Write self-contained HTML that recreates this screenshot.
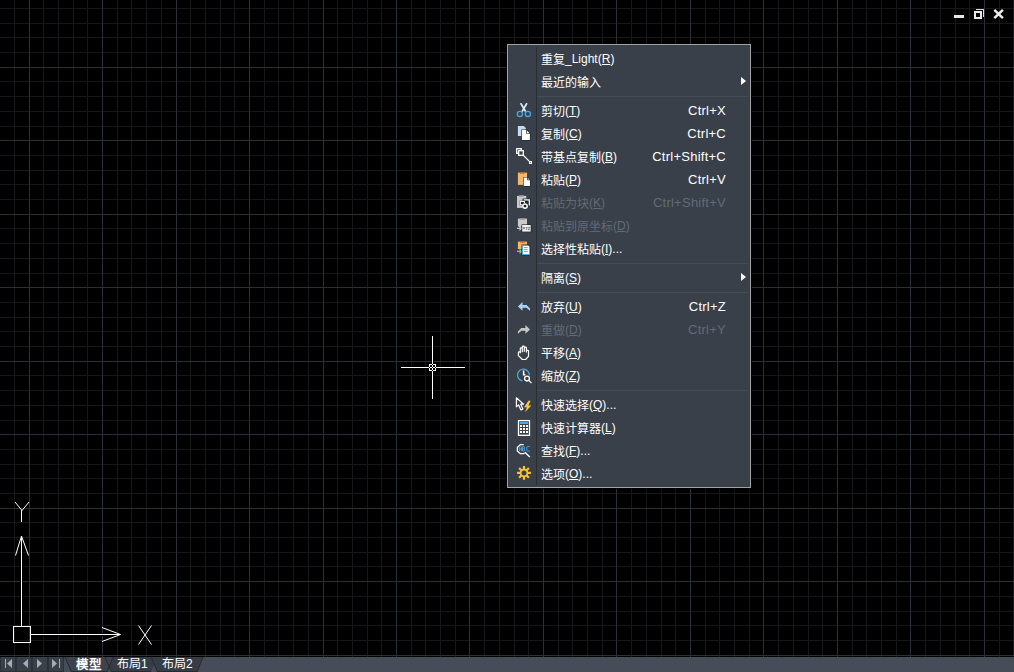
<!DOCTYPE html>
<html lang="zh-CN"><head><meta charset="utf-8">
<style>
html,body{margin:0;padding:0;}
body{width:1014px;height:672px;background:#000;overflow:hidden;position:relative;font-family:"Liberation Sans",sans-serif;}
svg{position:absolute;left:0;top:0;}
#menu{position:absolute;left:507px;top:44px;width:242px;height:442px;border:1px solid #a3a3a3;background:#394049;box-shadow:-1px 0 0 #000,1px 0 0 #000,0 1px 0 #000;}
#vsep{position:absolute;left:28px;top:2px;width:1px;height:438px;background:#2a2d32;}
.sep{position:absolute;left:29px;right:2px;height:1px;background:#464c56;}
.row{position:absolute;left:0;right:0;height:23px;color:#fff;font-size:12px;line-height:23px;}
.row.dis{color:#636b76;}
.lab{position:absolute;left:33px;top:2px;white-space:nowrap;}
.sc{position:absolute;right:24px;top:0px;font-size:13px;letter-spacing:0.25px;white-space:nowrap;}
u{text-decoration:underline;}
.lt{position:relative;top:-1px;}
.arr{position:absolute;left:233px;top:7px;width:0;height:0;border-left:5px solid #fff;border-top:4px solid transparent;border-bottom:4px solid transparent;}
#bar{position:absolute;left:0;top:657px;width:1014px;height:15px;background:#474d58;}
</style></head><body>
<svg width="1014" height="672" viewBox="0 0 1014 672" shape-rendering="crispEdges"><path d="M14.5 0V657M43.5 0V657M58.5 0V657M73.5 0V657M87.5 0V657M117.5 0V657M131.5 0V657M146.5 0V657M161.5 0V657M190.5 0V657M205.5 0V657M220.5 0V657M234.5 0V657M264.5 0V657M278.5 0V657M293.5 0V657M308.5 0V657M337.5 0V657M352.5 0V657M367.5 0V657M381.5 0V657M411.5 0V657M425.5 0V657M440.5 0V657M455.5 0V657M484.5 0V657M499.5 0V657M514.5 0V657M528.5 0V657M558.5 0V657M572.5 0V657M587.5 0V657M602.5 0V657M631.5 0V657M646.5 0V657M661.5 0V657M675.5 0V657M705.5 0V657M719.5 0V657M734.5 0V657M749.5 0V657M778.5 0V657M793.5 0V657M808.5 0V657M822.5 0V657M852.5 0V657M866.5 0V657M881.5 0V657M896.5 0V657M925.5 0V657M940.5 0V657M955.5 0V657M969.5 0V657M999.5 0V657M1013.5 0V657M0 8.5H1014M0 23.5H1014M0 37.5H1014M0 52.5H1014M0 81.5H1014M0 96.5H1014M0 111.5H1014M0 126.5H1014M0 155.5H1014M0 170.5H1014M0 184.5H1014M0 199.5H1014M0 228.5H1014M0 243.5H1014M0 258.5H1014M0 273.5H1014M0 302.5H1014M0 317.5H1014M0 331.5H1014M0 346.5H1014M0 375.5H1014M0 390.5H1014M0 405.5H1014M0 420.5H1014M0 449.5H1014M0 464.5H1014M0 478.5H1014M0 493.5H1014M0 522.5H1014M0 537.5H1014M0 552.5H1014M0 566.5H1014M0 596.5H1014M0 611.5H1014M0 625.5H1014M0 640.5H1014" stroke="#15181b" stroke-width="1" fill="none"/><path d="M29.5 0V657M102.5 0V657M176.5 0V657M249.5 0V657M323.5 0V657M396.5 0V657M469.5 0V657M543.5 0V657M616.5 0V657M690.5 0V657M763.5 0V657M837.5 0V657M910.5 0V657M984.5 0V657M0 67.5H1014M0 140.5H1014M0 214.5H1014M0 287.5H1014M0 361.5H1014M0 434.5H1014M0 508.5H1014M0 581.5H1014M0 655.5H1014" stroke="#2a3037" stroke-width="1" fill="none"/></svg>
<svg width="1014" height="672" viewBox="0 0 1014 672"><path d="M432.5 336V399M401 367.5H465" stroke="#000" stroke-width="3" fill="none"/><path d="M21.5 536V626M31 634.5H120" stroke="#000" stroke-width="3" fill="none"/><path d="M432.5 336V399M401 367.5H465" stroke="#fff" stroke-width="1" fill="none"/><rect x="429.5" y="364.5" width="6" height="6" fill="none" stroke="#fff"/><path d="M432 364h1v1h-1zM432 370h1v1h-1zM429 367h1v1h-1zM435 367h1v1h-1zM432 367h1v1h-1z" fill="#000" shape-rendering="crispEdges"/><path d="M21.5 536V626M31 634.5H120M21.5 536L15.5 555.5M21.5 536L28.5 555.5M120.5 634.5L102 627.5M120.5 634.5L102 641.5M15 502L22 510.5L29 502M21.5 510V522M138.5 625.5L151.5 644.5M151.5 625.5L138.5 644.5" stroke="#fff" stroke-width="1" fill="none"/><rect x="13.5" y="626.5" width="17" height="16" fill="none" stroke="#fff"/><rect x="954" y="15" width="10" height="3" fill="#e6e6e6"/><path d="M976 9.5H983.5V17" stroke="#dcdcdc" fill="none" shape-rendering="crispEdges"/><rect x="975" y="12" width="6" height="6" fill="none" stroke="#e8e8e8" stroke-width="2" shape-rendering="crispEdges"/><path d="M994.3 9.8L1002.9 18.1M1002.9 9.8L994.3 18.1" stroke="#ececec" stroke-width="2.5"/></svg>
<div id="menu"><div id="vsep"></div><div class="row" style="top:2px"><span class="lab">重复<span class="lt">_Light</span><span class="lt">(<u>R</u>)</span></span></div><div class="row" style="top:25px"><span class="lab">最近的输入</span><span class="arr"></span></div><div class="sep" style="top:51px"></div><div class="row" style="top:54px"><span class="lab">剪切<span class="lt">(<u>T</u>)</span></span><span class="sc">Ctrl+X</span></div><div class="row" style="top:77px"><span class="lab">复制<span class="lt">(<u>C</u>)</span></span><span class="sc">Ctrl+C</span></div><div class="row" style="top:100px"><span class="lab">带基点复制<span class="lt">(<u>B</u>)</span></span><span class="sc">Ctrl+Shift+C</span></div><div class="row" style="top:123px"><span class="lab">粘贴<span class="lt">(<u>P</u>)</span></span><span class="sc">Ctrl+V</span></div><div class="row dis" style="top:146px"><span class="lab">粘贴为块<span class="lt">(<u>K</u>)</span></span><span class="sc">Ctrl+Shift+V</span></div><div class="row dis" style="top:169px"><span class="lab">粘贴到原坐标<span class="lt">(<u>D</u>)</span></span></div><div class="row" style="top:192px"><span class="lab">选择性粘贴<span class="lt">(<u>I</u>)...</span></span></div><div class="sep" style="top:218px"></div><div class="row" style="top:221px"><span class="lab">隔离<span class="lt">(<u>S</u>)</span></span><span class="arr"></span></div><div class="sep" style="top:247px"></div><div class="row" style="top:250px"><span class="lab">放弃<span class="lt">(<u>U</u>)</span></span><span class="sc">Ctrl+Z</span></div><div class="row dis" style="top:273px"><span class="lab">重做<span class="lt">(<u>D</u>)</span></span><span class="sc">Ctrl+Y</span></div><div class="row" style="top:296px"><span class="lab">平移<span class="lt">(<u>A</u>)</span></span></div><div class="row" style="top:319px"><span class="lab">缩放<span class="lt">(<u>Z</u>)</span></span></div><div class="sep" style="top:345px"></div><div class="row" style="top:348px"><span class="lab">快速选择<span class="lt">(<u>Q</u>)...</span></span></div><div class="row" style="top:371px"><span class="lab">快速计算器<span class="lt">(<u>L</u>)</span></span></div><div class="row" style="top:394px"><span class="lab">查找<span class="lt">(<u>F</u>)...</span></span></div><div class="row" style="top:417px"><span class="lab">选项<span class="lt">(<u>O</u>)...</span></span></div></div>
<div id="bar"></div>
<svg width="1014" height="672" viewBox="0 0 1014 672"><g transform="translate(512 100)">
<path d="M9 3.8L13.3 11M14.6 3.8L10.4 11" stroke="#dde8f5" stroke-width="1.7" stroke-linecap="round"/>
<circle cx="7.9" cy="13.9" r="2.6" fill="none" stroke="#4aa7e6" stroke-width="1.3"/>
<circle cx="15.9" cy="13.9" r="2.6" fill="none" stroke="#4aa7e6" stroke-width="1.3"/>
</g><g transform="translate(512 123)">
<path d="M5.9 3H11.8L13.9 5.2V12.9H5.9Z" fill="#c6daf1"/>
<path d="M9.3 6.5H14.5L18.5 10.5V17.5H9.3Z" fill="#1f2328"/>
<path d="M9.9 7.1H14.2V10.8H17.9V17H9.9Z" fill="#fff"/>
<path d="M14.9 7.6L17.6 10.2H14.9Z" fill="#fff"/>
</g><g transform="translate(512 146)">
<rect x="4.7" y="2.7" width="4.6" height="4.6" fill="none" stroke="#fff" stroke-width="1.3"/>
<rect x="6.7" y="4.7" width="4.6" height="4.6" fill="#383e46" stroke="#fff" stroke-width="1.3"/>
<path d="M11.5 9.5L17.4 15.4" stroke="#fff" stroke-width="1.1"/>
<rect x="17" y="15" width="3" height="3" fill="#fff"/>
<rect x="18.2" y="16.2" width="0.8" height="0.8" fill="#383e46"/>
</g><g transform="translate(512 169)">
<rect x="5.9" y="3.6" width="9.1" height="12.3" fill="#f5b76c"/>
<rect x="8" y="3" width="4.9" height="1.7" fill="#b5692f"/>
<path d="M11.3 7.9H15.7L18.5 10.7V17.5H11.3Z" fill="#1f2328"/>
<path d="M11.8 8.4H15.2V11.2H18V17H11.8Z" fill="#fff"/>
<path d="M15.9 8.9L17.6 10.6H15.9Z" fill="#fff"/>
</g><g transform="translate(512 192)">
<rect x="5" y="3.9" width="9.3" height="12" fill="#c9c9c9"/>
<rect x="7.2" y="3" width="4.6" height="1.6" fill="#8c8c8c"/>
<rect x="10.6" y="6.6" width="8" height="7.8" fill="#1f2328"/>
<path d="M11.8 7.8H17.3V13.4" fill="none" stroke="#fff" stroke-width="1.2"/>
<rect x="7.6" y="8.7" width="5.5" height="4.8" fill="#1f2328"/>
<rect x="8.3" y="9.4" width="4.1" height="3.4" fill="none" stroke="#fff" stroke-width="1.1"/>
<circle cx="13" cy="14.1" r="3" fill="#1f2328"/>
<circle cx="13" cy="14.1" r="2.2" fill="none" stroke="#fff" stroke-width="1.5"/>
</g><g transform="translate(512 215)">
<rect x="5.9" y="3.6" width="9.1" height="7.5" fill="#c9c9c9"/>
<path d="M5.9 11.1H9.3V12.5L7.7 12.5Z" fill="#c9c9c9"/>
<rect x="8.2" y="3" width="4.7" height="1.6" fill="#8c8c8c"/>
<path d="M5 13.4H9.2M7.5 11.6L9.3 13.4L7.5 15.3" stroke="#c4c4c4" stroke-width="1.2" fill="none"/>
<rect x="9.6" y="9.4" width="9.7" height="7.8" fill="#1f2328"/>
<rect x="10.2" y="10" width="8.5" height="6.6" fill="#f0f0f0"/>
<path d="M11.2 12L12.8 14.2M12.8 12L11.2 14.2M13.8 12L14.6 13M15.4 12L14.2 14.8M16.2 12.3H17.8L16.2 14.6H17.8" stroke="#555" stroke-width="0.7" fill="none"/>
</g><g transform="translate(512 238)">
<rect x="5.9" y="3.6" width="9.1" height="7.4" fill="#f5b76c"/>
<rect x="5.9" y="10" width="3.6" height="1" fill="#f5b76c"/>
<rect x="8" y="3" width="4.9" height="1.7" fill="#b5692f"/>
<path d="M5 13.4H9.4M7.6 11.5L9.5 13.4L7.6 15.3" stroke="#7fd07e" stroke-width="1.2" fill="none"/>
<path d="M9.5 6.5H16.3L18.5 8.7V17.5H9.5Z" fill="#1f2328"/>
<path d="M10 7H16.1L18 8.9V17H10Z" fill="#4aa8f0"/>
<rect x="11" y="8" width="6" height="8" fill="#fff"/>
<path d="M12.1 9.5H15.7M12.1 11.4H15.7M12.1 13.5H15.7" stroke="#4aa8f0" stroke-width="0.9"/>
</g><g transform="translate(512 296)">
<path d="M5.9 10.4L10.5 5.9V8.9H14.6L18 12.4V14.8L14.4 11.8H10.5V14.8Z" fill="#a8d3f6"/>
</g><g transform="translate(512 319)">
<path d="M18 10.4L13.4 5.9V8.9H9.3L5.9 12.4V14.8L9.5 11.8H13.4V14.8Z" fill="#c6c6c6"/>
</g><g transform="translate(512 342)">
<path d="M10.4 17.5L6.4 13.6V10.5Q6.4 9.8 7.3 9.8Q8.3 9.8 8.3 10.6V6.5Q8.3 5.8 9.3 5.8Q10.3 5.8 10.3 6.5V4.9Q10.3 4.2 11.3 4.2Q12.3 4.2 12.3 4.9V5.7Q12.3 5.1 13.3 5.1Q14.4 5.1 14.4 5.8V8.9Q14.4 8.4 15.4 8.4Q16.5 8.4 16.5 9.1V14.4L13.6 17.5Z M10.3 6.5V10.3M12.3 5.7V9.8M14.4 8.9V10.6M8.3 10.6V11.3" fill="none" stroke="#fff" stroke-width="1.2" stroke-linejoin="round"/>
</g><g transform="translate(512 365)">
<path d="M10.4 15.9A5.9 5.9 0 1 1 17.3 10.2" fill="none" stroke="#4aa8e8" stroke-width="1.3"/>
<path d="M11.6 5.6V9.7H13.3" fill="none" stroke="#fff" stroke-width="1.5"/>
<circle cx="15" cy="13.6" r="2.4" fill="none" stroke="#fff" stroke-width="1.3"/>
<path d="M16.8 15.4L19.5 18.1" stroke="#fff" stroke-width="1.3"/>
</g><g transform="translate(512 394)">
<path d="M4.4 3.8V12.8L6.6 10.9L8.9 15.9L10.9 15L8.7 10.2H11.6Z" fill="none" stroke="#fff" stroke-width="1.2" stroke-linejoin="round"/>
<path d="M16.6 6.8H18.6L16.4 11.4H19.3L13.1 18.2L14.9 13.3H12Z" fill="#f8c93b"/>
</g><g transform="translate(512 417)">
<rect x="6.5" y="3.6" width="11" height="14.7" fill="none" stroke="#fff" stroke-width="1.3"/>
<rect x="7.9" y="5" width="8.2" height="2" fill="#4aa8f0"/>
<path d="M8 8H10V10H8ZM11 8H13V10H11ZM14 8H16V10H14ZM8 11H10V13H8ZM11 11H13V13H11ZM14 11H16V13H14ZM8 14H10V16H8ZM11 14H13V16H11ZM14 14H16V16H14Z" fill="#fff"/>
</g><g transform="translate(512 440)"><g transform="translate(0 -0.7)">
<path d="M11.7 5.3H8.3L5.3 8.3V11.6L8.3 14.4H11.7L12.6 13.5" fill="none" stroke="#fff" stroke-width="1.2"/>
<path d="M12.9 13L17.8 17.7" stroke="#fff" stroke-width="1.4"/>
<path d="M7.4 11.8V8.2L8.4 7.2L9.4 8.2V11.8M7.4 9.7H9.4M10.6 11.8V7.2H12L12.6 7.8V9L12 9.5L12.6 10V11.2L12 11.8ZM10.6 9.5H12M17.8 7.2H15.3L14.8 7.7V11.3L15.3 11.8H17.8" fill="none" stroke="#4aa8f0" stroke-width="0.9"/></g>
</g><g transform="translate(512 463)"><circle cx="12.00" cy="9.90" r="3.4" fill="none" stroke="#f7c33b" stroke-width="1.8"/><path d="M15.80 9.90L18.90 9.90M14.69 12.59L16.88 14.78M12.00 13.70L12.00 16.80M9.31 12.59L7.12 14.78M8.20 9.90L5.10 9.90M9.31 7.21L7.12 5.02M12.00 6.10L12.00 3.00M14.69 7.21L16.88 5.02" stroke="#f7c33b" stroke-width="2.2"/></g><rect x="0" y="657" width="64" height="15" fill="#2c3137"/><rect x="1" y="657" width="14" height="14" fill="#394049"/><rect x="17" y="657" width="14" height="14" fill="#394049"/><rect x="33" y="657" width="14" height="14" fill="#394049"/><rect x="49" y="657" width="14" height="14" fill="#394049"/><rect x="5" y="659" width="1" height="9" fill="#a6adb6"/><path d="M7 663.5L12 659V668Z" fill="#a6adb6"/><path d="M23 663.5L28 659V668Z" fill="#a6adb6"/><path d="M42 663.5L37 659V668Z" fill="#a6adb6"/><path d="M57 663.5L52 659V668Z" fill="#a6adb6"/><rect x="59" y="659" width="1" height="9" fill="#a6adb6"/><path d="M151 657H203L197 672H157.5Z" fill="#373d46"/><path d="M105 657H157L151 672H111.5Z" fill="#373d46"/><path d="M65 657H113L107 672H71.5Z" fill="#3e444e"/><path d="M151 657L157.5 672M203 657L197 672M105 657L111.5 672M65 657L71.5 672M113 657L107 672M71.5 671.5H107M111.5 671.5H151M157.5 671.5H197" stroke="#262a30" stroke-width="1"/><text x="76" y="668.5" fill="#fff" font-size="12.5" font-weight="bold">模型</text><text x="117" y="668" fill="#fff" font-size="12">布局1</text><text x="162" y="668" fill="#fff" font-size="12">布局2</text></svg>
</body></html>
